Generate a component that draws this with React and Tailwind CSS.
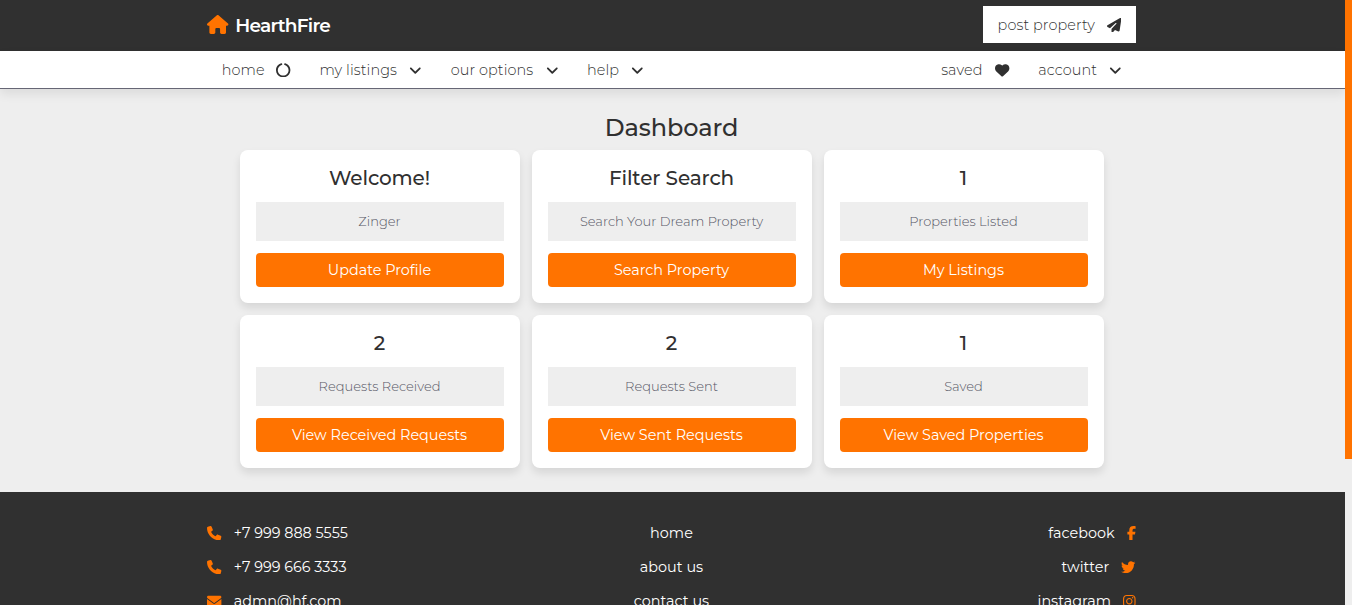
import {
  FaHouse,
  FaCircleNotch,
  FaAngleDown,
  FaHeart,
  FaPaperPlane,
  FaPhone,
  FaEnvelope,
  FaFacebookF,
  FaTwitter,
  FaInstagram,
} from "react-icons/fa6";

const cards = [
  { title: "Welcome!", text: "Zinger", action: "Update Profile" },
  { title: "Filter Search", text: "Search Your Dream Property", action: "Search Property" },
  { title: "1", text: "Properties Listed", action: "My Listings" },
  { title: "2", text: "Requests Received", action: "View Received Requests" },
  { title: "2", text: "Requests Sent", action: "View Sent Requests" },
  { title: "1", text: "Saved", action: "View Saved Properties" },
];

function NavLink({ label, width, children }) {
  return (
    <a className="flex items-center gap-[11.5px] px-[14.4px] text-[14.4px] font-light tracking-[0.1px] whitespace-nowrap">
      <span className={`pt-px ${width}`}>{label}</span>
      {children}
    </a>
  );
}

const chevron = <FaAngleDown className="h-[14.4px] w-[12.6px]" />;

export default function App() {
  return (
    <div className="flex h-[605px] w-full overflow-hidden bg-[#eeeeee] font-['Montserrat','Inter',sans-serif] text-[#303030]">
      <div className="flex w-[1345px] shrink-0 flex-col">
        <header className="h-[51px] shrink-0 bg-[#303030]">
          <div className="ml-[207.4px] flex h-[49px] w-[928.6px] items-center justify-between">
            <a className="flex items-center gap-[6.5px] text-[18.5px] font-semibold tracking-[-0.75px] text-white">
              <FaHouse className="h-[19px] w-[21.4px] text-[#ff7300]" />
              <span className="pt-0.5">HearthFire</span>
            </a>
            <a className="flex h-[37px] w-[153px] items-center justify-center gap-[12px] bg-white pt-px text-[14.4px] font-light tracking-[0.1px]">
              <span className="pt-px">post property</span>
              <FaPaperPlane className="size-[14.4px]" />
            </a>
          </div>
        </header>
        <nav className="h-[38px] shrink-0 border-b border-[#666675] bg-white shadow-[0_5px_10px_rgba(0,0,0,0.08)]">
          <div className="ml-[207.4px] flex h-full w-[928.6px] items-center justify-between pt-[1.5px]">
            <div className="flex">
              <NavLink label="home" width="w-[43px]"><FaCircleNotch className="size-[14.4px]" /></NavLink>
              <NavLink label="my listings" width="w-[78.4px]">{chevron}</NavLink>
              <NavLink label="our options" width="w-[83.4px]">{chevron}</NavLink>
              <NavLink label="help" width="w-[32.2px]">{chevron}</NavLink>
            </div>
            <div className="flex">
              <NavLink label="saved" width="w-[42.5px]"><FaHeart className="size-[14.4px]" /></NavLink>
              <NavLink label="account" width="w-[59.2px]">{chevron}</NavLink>
            </div>
          </div>
        </nav>

        <main className="h-[403px] shrink-0 pt-[23px]">
          <h1 className="ml-[239.5px] h-[38px] w-[864px] text-center text-[24px] leading-[32px] font-medium tracking-[-0.1px]">Dashboard</h1>
          <section className="ml-[240px] grid w-[864px] grid-cols-3 gap-3">
            {cards.map((c) => (
              <article key={c.action} className="flex h-[153px] flex-col rounded-lg bg-white px-4 pt-3 text-center shadow-[0_5px_8px_rgba(0,0,0,0.1)]">
                <h2 className="h-[40px] pr-px text-[20px] leading-[32px] font-medium tracking-[-0.12px]">{c.title}</h2>
                <p className="h-[39px] bg-[#eeeeee] pr-px text-[13px] leading-[39px] font-light text-[#565665]">{c.text}</p>
                <button className="mt-3 h-[34px] rounded bg-[#ff7300] pt-[1.5px] pr-px text-[14.4px] text-white">{c.action}</button>
              </article>
            ))}
          </section>
        </main>

        <footer className="h-[113px] shrink-0 overflow-hidden bg-[#303030] pt-[24px] text-[14.4px] text-white">
          <div className="ml-[207.4px] grid w-[928.2px] grid-cols-3 leading-[34px]">
            <div className="flex flex-col">
              <a className="flex items-center gap-3"><FaPhone className="size-[14.4px] text-[#ff7300]" />+7 999 888 5555</a>
              <a className="flex items-center gap-3"><FaPhone className="size-[14.4px] text-[#ff7300]" />+7 999 666 3333</a>
              <a className="flex items-center gap-3"><FaEnvelope className="size-[14.4px] text-[#ff7300]" />admn@hf.com</a>
            </div>
            <div className="flex flex-col text-center">
              <a>home</a>
              <a>about us</a>
              <a>contact us</a>
            </div>
            <div className="flex flex-col items-end">
              <a className="flex items-center gap-3">facebook<FaFacebookF className="h-[14.4px] w-[9px] text-[#ff7300]" /></a>
              <a className="flex items-center gap-3">twitter<FaTwitter className="size-[14.4px] text-[#ff7300]" /></a>
              <a className="flex items-center gap-3">instagram<FaInstagram className="h-[14.4px] w-[12.6px] text-[#ff7300]" /></a>
            </div>
          </div>
        </footer>
      </div>
      <div className="w-[7px] shrink-0">
        <div className="h-[459px] bg-[#ff7300]" />
      </div>
    </div>
  );
}
